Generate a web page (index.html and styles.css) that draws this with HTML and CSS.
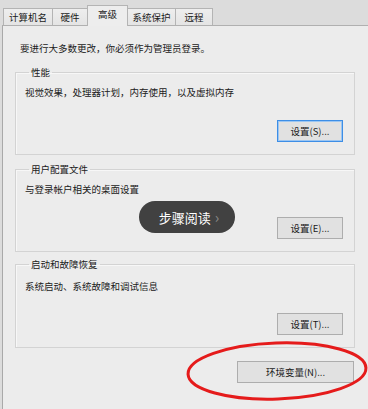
FILE: index.html
```html
<!DOCTYPE html>
<html lang="zh-CN">
<head>
<meta charset="utf-8">
<link rel="stylesheet" href="styles.css">
</head>
<body>
<div class="window">
  <div class="tabs">
    <div class="tab t1">计算机名</div>
    <div class="tab t2">硬件</div>
    <div class="tab t3 active">高级</div>
    <div class="tab t4">系统保护</div>
    <div class="tab t5">远程</div>
  </div>
  <div class="panel">
    <p class="note">要进行大多数更改，你必须作为管理员登录。</p>
    <fieldset class="group g1">
      <legend>性能</legend>
      <p class="desc">视觉效果，处理器计划，内存使用，以及虚拟内存</p>
      <div class="actions"><button class="btn default">设置(S)...</button></div>
    </fieldset>
    <fieldset class="group g2">
      <legend>用户配置文件</legend>
      <p class="desc">与登录帐户相关的桌面设置</p>
      <div class="actions"><button class="btn">设置(E)...</button></div>
    </fieldset>
    <fieldset class="group g3">
      <legend>启动和故障恢复</legend>
      <p class="desc">系统启动、系统故障和调试信息</p>
      <div class="actions"><button class="btn">设置(T)...</button></div>
    </fieldset>
    <div class="bottom">
      <button class="btn env">环境变量(N)...</button>
    </div>
  </div>
  <div class="pill">步骤阅读 <span class="chev">&#x203A;</span></div>
  <svg class="circle" width="368" height="409" viewBox="0 0 368 409">
    <ellipse cx="277" cy="371" rx="89" ry="28" fill="none" stroke="#e51b1b" stroke-width="3" transform="rotate(-2 277 371)"/>
  </svg>
</div>
</body>
</html>
```

FILE: styles.css
```css
html, body {
  margin: 0;
  padding: 0;
  background: #dcdcdc;
}
.window {
  position: relative;
  width: 368px;
  height: 409px;
  overflow: hidden;
  font-family: "Noto Sans CJK SC", "Microsoft YaHei", sans-serif;
  font-size: 9.5px;
  color: #1a1a1a;
}
.tabs {
  height: 25px;
  display: flex;
  align-items: flex-end;
  padding-left: 3px;
  background: #dcdcdc;
}
.tab {
  height: 16px;
  border: 1px solid #b4b4b4;
  border-bottom: none;
  background: linear-gradient(#eeeeee, #e4e4e4);
  display: flex;
  align-items: center;
  justify-content: center;
  line-height: 14px;
  margin-left: -1px;
}
.t1 { width: 48px; margin-left: 0; }
.t2 { width: 34px; }
.t3 { width: 41px; }
.t4 { width: 47px; }
.t5 { width: 36px; }
.tab.active {
  height: 19px;
  background: #ededed;
  margin-bottom: -1px;
  position: relative;
  z-index: 1;
  align-items: flex-start;
  padding-top: 1px;
  box-sizing: border-box;
  height: 21px;
}
.panel {
  margin-left: 2px;
  border-left: 1px solid #a9a9a9;
  border-top: 1px solid #b0b0b0;
  background: #ececec;
  padding: 15px 0 40px 12px;
  height: 409px;
  box-sizing: border-box;
}
.note {
  margin: 0 0 10px 5px;
  line-height: 14px;
}
.group {
  margin: 0;
  width: 340px;
  box-sizing: border-box;
  border: 1px solid #d3d3d3;
  box-shadow: inset 1px 1px 0 #f7f7f7;
  padding: 6px 11px 12px 9px;
  min-width: 0;
}
.group legend {
  padding: 0 2px;
  margin-left: 4px;
  line-height: 14px;
}
.g2 { margin-top: 7px; }
.g3 { margin-top: 5px; padding-top: 8px; }
.desc {
  margin: 0;
  line-height: 14px;
}
.actions {
  margin-top: 21px;
  display: flex;
  justify-content: flex-end;
}
.g3 .actions { margin-top: 20px; }
.btn {
  width: 66px;
  height: 22px;
  box-sizing: border-box;
  border: 1px solid #adadad;
  background: #e1e1e1;
  font-family: inherit;
  font-size: 9.5px;
  color: #1a1a1a;
  padding: 0;
  line-height: 14px;
}
.btn.default {
  border-color: #3d8ee6;
  box-shadow: inset 0 0 0 1px #9cc6f2;
}
.bottom {
  width: 339px;
  display: flex;
  justify-content: flex-end;
  margin-top: 13px;
}
.btn.env {
  width: 117px;
}
.pill {
  position: absolute;
  left: 139px;
  top: 201px;
  width: 96px;
  height: 32px;
  border-radius: 16px;
  background: rgba(50, 50, 50, 0.92);
  color: #ffffff;
  font-size: 13px;
  display: flex;
  align-items: center;
  justify-content: center;
  gap: 4px;
  box-sizing: border-box;
  padding-left: 4px;
}
.chev {
  color: #8a8a8a;
  font-size: 15px;
  line-height: 1;
  margin-top: -2px;
}
.circle {
  position: absolute;
  left: 0;
  top: 0;
  pointer-events: none;
}
```
